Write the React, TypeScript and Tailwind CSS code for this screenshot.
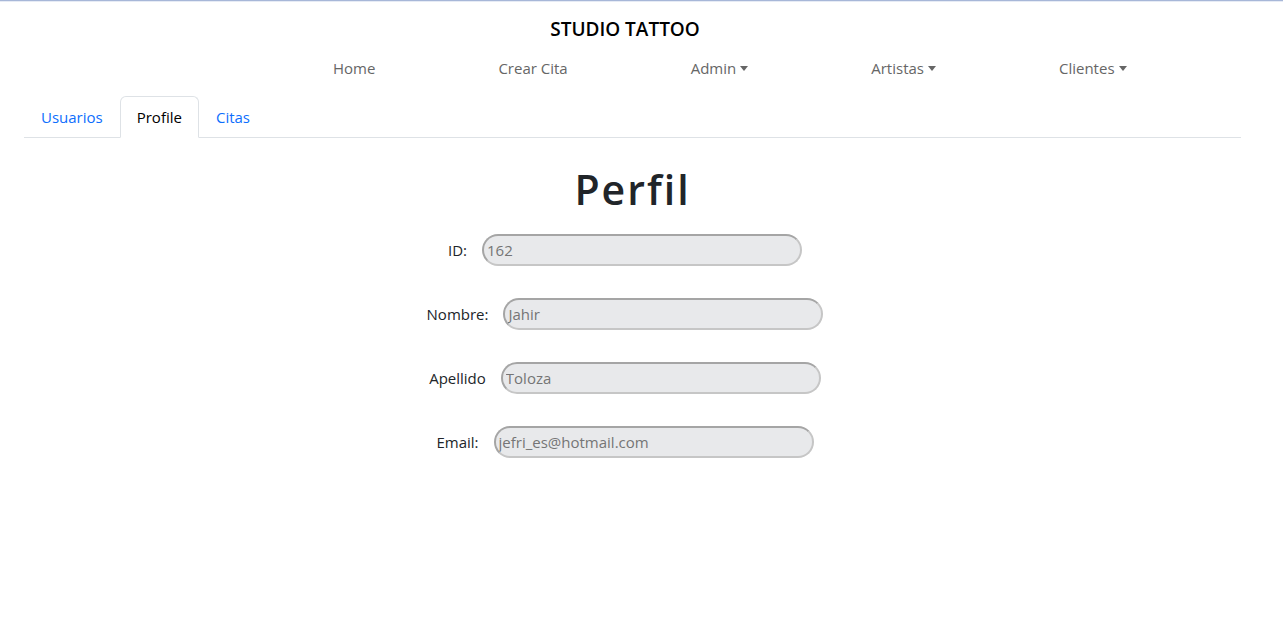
const font = "font-['Open_Sans','Noto_Sans',sans-serif]";

function Caret() {
  return (
    <span className="inline-block ml-[4px] align-[3px] w-0 h-0 border-t-[5px] border-t-current border-x-[4.5px] border-x-transparent" />
  );
}

function Field({ label, value }: { label: string; value: string }) {
  return (
    <div className="flex items-center justify-center gap-[15px]">
      <label className="text-[15px] text-[#212529]">{label}</label>
      <input
        readOnly
        value={value}
        className="w-[320px] h-[32px] rounded-full bg-[#e8e9eb] pl-[3px] text-[15px] text-[#757575] border-2 border-t-[#a5a5a5] border-l-[#a5a5a5] border-b-[#c6c6c6] border-r-[#c6c6c6] outline-none"
      />
    </div>
  );
}

export default function App() {
  return (
    <div className={`w-[1283px] h-[637px] bg-white ${font}`}>
      <div className="h-px bg-[#a7b7d8]" />
      <div className="h-px bg-[#e6ebf5]" />

      <div className="w-[1250px] pt-[15px] text-center text-[19px] leading-[24px] font-semibold text-black">
        STUDIO TATTOO
      </div>

      <nav className="mt-[7px] flex pl-[325px] gap-[107px] text-[15px] leading-[24px] text-[#666]">
        <a className="px-2 py-2">Home</a>
        <a className="px-2 py-2">Crear Cita</a>
        <a className="px-2 py-2">
          Admin
          <Caret />
        </a>
        <a className="px-2 py-2">
          Artistas
          <Caret />
        </a>
        <a className="px-2 py-2">
          Clientes
          <Caret />
        </a>
      </nav>

      <ul className="mt-[8px] ml-[24px] w-[1217px] flex border-b border-[#dee2e6] text-[15px] leading-[24px]">
        <li className="-mb-px">
          <a className="block px-4 py-2 border border-transparent text-[#0d6efd]">Usuarios</a>
        </li>
        <li className="-mb-px">
          <a className="block px-4 py-2 border border-[#dee2e6] border-b-white rounded-t-[6px] bg-white text-black">
            Profile
          </a>
        </li>
        <li className="-mb-px">
          <a className="block px-4 py-2 border border-transparent text-[#0d6efd]">Citas</a>
        </li>
      </ul>

      <div className="w-[1250px]">
        <h1 className="mt-[27px] pl-[15px] text-center text-[41px] leading-[48px] font-semibold tracking-[2px] text-[#212529]">
          Perfil
        </h1>
        <div className="mt-[21px] flex flex-col gap-[32px]">
          <Field label="ID:" value="162" />
          <Field label="Nombre:" value="Jahir" />
          <Field label="Apellido" value="Toloza" />
          <Field label="Email:" value="jefri_es@hotmail.com" />
        </div>
      </div>
    </div>
  );
}
